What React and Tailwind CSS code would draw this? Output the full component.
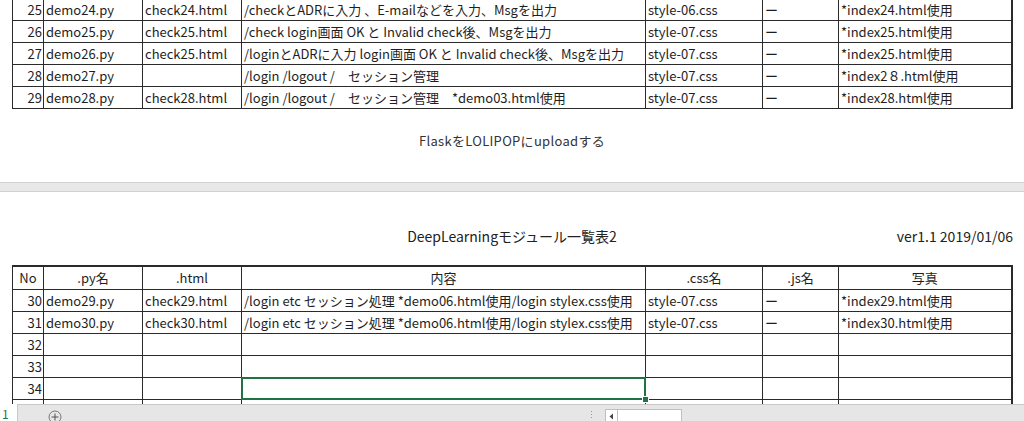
import React from 'react';

const cols = ['w-[31px]', 'w-[99px]', 'w-[99px]', 'w-[404px]', 'w-[117px]', 'w-[76px]', 'w-[173px]'];

const topRows = [
  ['25', 'demo24.py', 'check24.html', '/checkとADRに入力 、E-mailなどを入力、Msgを出力', 'style-06.css', 'ー', '*index24.html使用'],
  ['26', 'demo25.py', 'check25.html', '/check login画面 OK と Invalid check後、Msgを出力', 'style-07.css', 'ー', '*index25.html使用'],
  ['27', 'demo26.py', 'check25.html', '/loginとADRに入力 login画面 OK と Invalid check後、Msgを出力', 'style-07.css', 'ー', '*index25.html使用'],
  ['28', 'demo27.py', '', '/login /logout /　セッション管理', 'style-07.css', 'ー', '*index2８.html使用'],
  ['29', 'demo28.py', 'check28.html', '/login /logout /　セッション管理　*demo03.html使用', 'style-07.css', 'ー', '*index28.html使用'],
];

const bottomRows = [
  ['30', 'demo29.py', 'check29.html', '/login etc セッション処理 *demo06.html使用/login stylex.css使用', 'style-07.css', 'ー', '*index29.html使用'],
  ['31', 'demo30.py', 'check30.html', '/login etc セッション処理 *demo06.html使用/login stylex.css使用', 'style-07.css', 'ー', '*index30.html使用'],
  ['32', '', '', '', '', '', ''],
  ['33', '', '', '', '', '', ''],
  ['34', '', '', '', '', '', ''],
  ['', '', '', '', '', '', ''],
];

const headers = ['No', '.py名', '.html', '内容', '.css名', '.js名', '写真'];

function Cols() {
  return (
    <colgroup>
      {cols.map((c, i) => (
        <col key={i} className={c} />
      ))}
    </colgroup>
  );
}

function Row({ row, selected }) {
  return (
    <tr className="h-[22px]">
      {row.map((cell, i) => {
        const sel = selected && i === 3;
        return (
          <td
            key={i}
            className={`border border-[#2a2a2a] p-0 whitespace-nowrap ${
              sel ? 'relative' : 'overflow-hidden'
            } ${i === 0 ? 'text-right pr-[1px]' : 'text-left pl-[2px]'} ${
              i === 6 ? 'border-r-2' : ''
            }`}
          >
            {cell}
            {sel && (
              <div className="absolute inset-[-1px] border-2 border-[#217346]">
                <div className="absolute right-[-5px] bottom-[-5px] w-[7px] h-[7px] bg-[#217346] border border-white" />
              </div>
            )}
          </td>
        );
      })}
    </tr>
  );
}

export default function App() {
  return (
    <div className="w-[1024px] h-[421px] overflow-hidden bg-white flex flex-col font-['Noto_Sans_CJK_JP',sans-serif] text-[13px] leading-none text-[#1e1e1e]">
      <div className="flex-1 overflow-hidden">
        {/* upper sheet section */}
        <table className="ml-[12px] mt-[-2px] border-collapse table-fixed w-[999px]">
          <Cols />
          <tbody>
            {topRows.map((r) => (
              <Row key={r[0]} row={r} />
            ))}
          </tbody>
        </table>

        <div className="mt-[25px] text-center text-[13px] text-[#333] tracking-[0.3px]">
          FlaskをLOLIPOPにuploadする
        </div>

        {/* page break */}
        <div className="mt-[35px] h-[10px] bg-[#e8e8e8] border-y border-[#d2d2d2]" />

        <div className="mt-[37px] relative flex justify-center text-[14px] text-[#222]">
          <span>DeepLearningモジュール一覧表2</span>
          <span className="absolute right-[11px] top-0">ver1.1 2019/01/06</span>
        </div>

        <table className="ml-[12px] mt-[22px] border-collapse table-fixed w-[999px]">
          <Cols />
          <tbody>
            <tr className="h-[23px]">
              {headers.map((h, i) => (
                <td
                  key={i}
                  className={`border border-[#2a2a2a] border-t-2 p-0 text-center ${i === 6 ? 'border-r-2' : ''}`}
                >
                  {h}
                </td>
              ))}
            </tr>
            {bottomRows.map((r, i) => (
              <Row key={i} row={r} selected={r[0] === '34'} />
            ))}
          </tbody>
        </table>
      </div>

      {/* sheet tab bar */}
      <div className="h-[17px] shrink-0 flex text-[12px] relative z-10">
        <div className="w-[17px] bg-white text-[#217346] pl-[2px] pt-[4px] leading-none">1</div>
        <div className="flex-1 bg-[#e6e6e6] border-t border-l border-[#c8c8c8] flex items-start">
          <svg className="ml-[30px] mt-[5px]" width="14" height="14" viewBox="0 0 14 14">
            <circle cx="7" cy="7" r="6" fill="none" stroke="#777" strokeWidth="1" />
            <path d="M7 3.5v7M3.5 7h7" stroke="#555" strokeWidth="1" />
          </svg>
          <div className="ml-[529px] mt-[6px] flex flex-col gap-[2px]">
            <div className="w-[1px] h-[1px] bg-[#999]" />
            <div className="w-[1px] h-[1px] bg-[#999]" />
            <div className="w-[1px] h-[1px] bg-[#999]" />
          </div>
          <div className="ml-[13px] mt-[4px] w-[77px] h-[14px] bg-white border border-[#bfbfbf] flex">
            <div className="w-[12px] h-full border-r border-[#bfbfbf] flex items-center justify-center">
              <svg width="5" height="7" viewBox="0 0 5 7">
                <path d="M4 0.5L0.5 3.5L4 6.5Z" fill="#444" />
              </svg>
            </div>
          </div>
        </div>
      </div>
    </div>
  );
}
